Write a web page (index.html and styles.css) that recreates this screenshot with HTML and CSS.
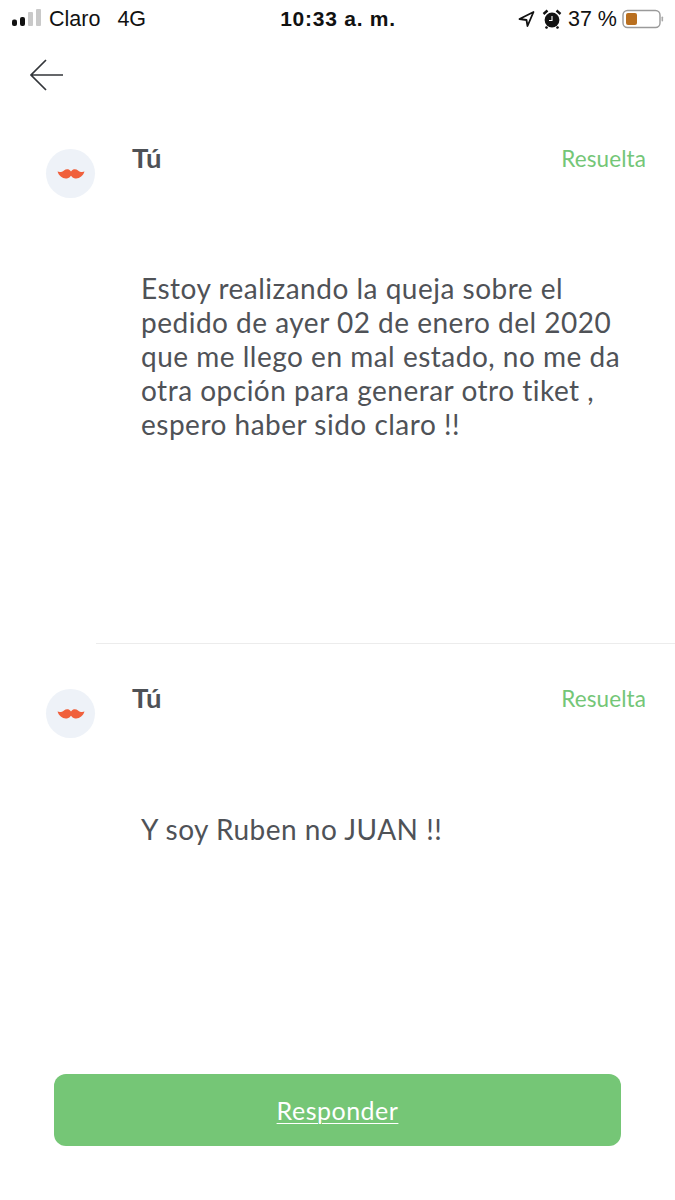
FILE: index.html
```html
<!DOCTYPE html>
<html lang="es">
<head>
<meta charset="utf-8">
<title>Ticket</title>
<link rel="stylesheet" href="styles.css">
</head>
<body>
<div class="page">
  <header class="status">
    <div class="st-left">
      <svg class="signal" width="30" height="20" viewBox="0 0 30 20"><rect x="0" y="10.5" width="5" height="6.5" rx="2" fill="#111"/><rect x="8" y="8" width="5" height="9" rx="2" fill="#111"/><rect x="16" y="3" width="5" height="14" rx="1" fill="#c9c9c9"/><rect x="24" y="0" width="5" height="17" rx="1" fill="#c9c9c9"/></svg>
      <span class="carrier">Claro</span><span class="net">4G</span>
    </div>
    <div class="st-time">10:33 a. m.</div>
    <div class="st-right">
      <svg width="19" height="18" viewBox="0 0 18 18"><path d="M16 2 L2 9 L9 10 L10 16 Z" fill="none" stroke="#111" stroke-width="1.8" stroke-linejoin="round"/></svg>
      <svg width="20" height="20" viewBox="0 0 20 20"><circle cx="10" cy="11" r="7.4" fill="#111"/><path d="M1.5 5 L5.5 1.5 M18.5 5 L14.5 1.5 M5 17.5 L4 19.5 M15 17.5 L16 19.5" stroke="#111" stroke-width="2.4" fill="none"/><path d="M10 7 V11.5 H7" stroke="#fff" stroke-width="1.1" fill="none"/></svg>
      <span class="pct">37 %</span>
      <svg class="batt" width="42" height="20" viewBox="0 0 42 20"><rect x="1" y="1.5" width="37" height="17" rx="4.5" fill="#fff" stroke="#9a9a9a" stroke-width="1.4"/><rect x="4" y="4" width="11" height="12" rx="2" fill="#b96f1f"/><rect x="39.5" y="7.5" width="1.6" height="5" rx="0.8" fill="#aaa"/></svg>
    </div>
  </header>

  <nav class="nav">
    <svg width="36" height="34" viewBox="0 0 36 34"><path d="M2 17 H34 M17 2 L2 17 L17 32" fill="none" stroke="#33363a" stroke-width="1.7"/></svg>
  </nav>

  <section class="msg first">
    <div class="msg-head">
      <div class="avatar"><svg width="28" height="12" viewBox="0 0 28 12"><path d="M14 3.4 C16 .6 19 .8 21 2.4 C23 4 25 4.4 27.5 3.6 C26 8.5 22 11 18 10.4 C16.2 10.1 14.8 9 14 7.8 C13.2 9 11.8 10.1 10 10.4 C6 11 2 8.5 .5 3.6 C3 4.4 5 4 7 2.4 C9 .8 12 .6 14 3.4 Z" fill="#f0603c"/></svg></div>
      <div class="name">Tú</div>
      <div class="state">Resuelta</div>
    </div>
    <p class="body">Estoy realizando la queja sobre el<br>pedido de ayer 02 de enero del 2020<br>que me llego en mal estado, no me da<br>otra opción para generar otro tiket ,<br>espero haber sido claro !!</p>
  </section>

  <div class="rule"></div>

  <section class="msg second">
    <div class="msg-head">
      <div class="avatar"><svg width="28" height="12" viewBox="0 0 28 12"><path d="M14 3.4 C16 .6 19 .8 21 2.4 C23 4 25 4.4 27.5 3.6 C26 8.5 22 11 18 10.4 C16.2 10.1 14.8 9 14 7.8 C13.2 9 11.8 10.1 10 10.4 C6 11 2 8.5 .5 3.6 C3 4.4 5 4 7 2.4 C9 .8 12 .6 14 3.4 Z" fill="#f0603c"/></svg></div>
      <div class="name">Tú</div>
      <div class="state">Resuelta</div>
    </div>
    <p class="body">Y soy Ruben no JUAN !!</p>
  </section>

  <div class="foot"><a class="reply">Responder</a></div>
</div>
</body>
</html>
```

FILE: styles.css
```css
* { box-sizing: border-box; }
html, body { margin: 0; padding: 0; background: #fff; }
.page { width: 675px; height: 1200px; display: flex; flex-direction: column; font-family: Lato, "Open Sans", sans-serif; color: #45484d; overflow: hidden; }
.status { height: 38px; padding: 0 11px 0 12px; display: flex; align-items: center; justify-content: space-between; font-family: "Liberation Sans", Arial, sans-serif; font-size: 21.5px; color: #111; }
.st-left { display: flex; align-items: center; width: 202px; }
.signal { margin-right: 7px; }
.net { margin-left: 17px; }
.st-time { font-weight: 700; letter-spacing: .75px; font-size: 21px; }
.st-right { display: flex; align-items: center; gap: 6px; width: 202px; justify-content: flex-end; white-space: nowrap; }
.batt { margin-left: -1px; }
.nav { height: 72px; padding: 20px 0 0 29px; }
.msg { position: relative; }
.first { height: 533px; }
.second { height: 430px; }
.msg-head { display: flex; height: 88px; padding-left: 46px; padding-right: 29px; align-items: flex-start; }
.avatar { width: 49px; height: 49px; border-radius: 50%; background: #eef2f8; display: flex; align-items: center; justify-content: center; flex: none; }
.first .msg-head { padding-top: 39px; }
.second .msg-head { padding-top: 45px; }
.name { margin-left: 37px; font-size: 27.5px; font-weight: 700; line-height: 30px; margin-top: -6px; color: #4e5156; }
.state { margin-left: auto; font-size: 22.5px; line-height: 24px; letter-spacing: .1px; color: #74c677; margin-top: -2px; }
.body { margin: 0; padding-left: 141px; font-size: 28px; letter-spacing: .5px; line-height: 34px; color: #4f5257; white-space: nowrap; }
.first .body { margin-top: 73px; }
.second .body { margin-top: 80px; }
.rule { height: 1px; margin-left: 96px; background: #ececec; flex: none; }
.foot { padding: 0 54px; }
.reply { display: flex; align-items: center; justify-content: center; height: 72px; border-radius: 12px; background: #75c676; color: #fff; font-size: 25px; letter-spacing: .5px; text-decoration: underline; text-underline-offset: 3px; text-decoration-thickness: 1px; }
```
